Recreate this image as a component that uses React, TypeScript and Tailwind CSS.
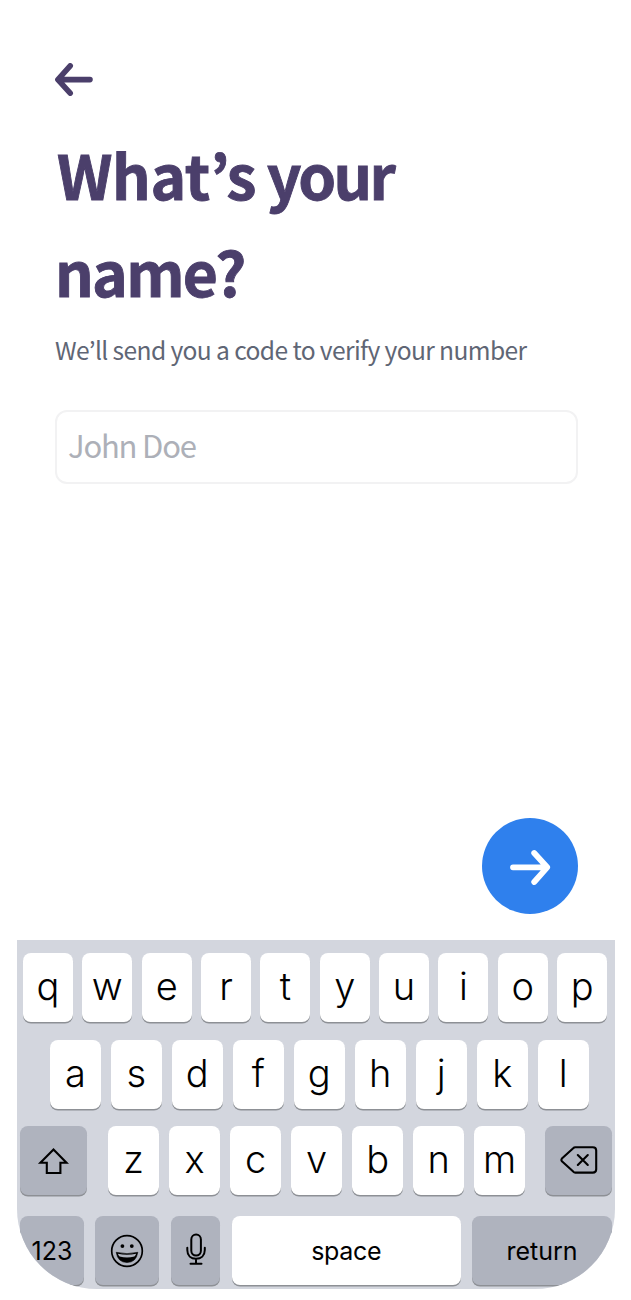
import type { ReactNode } from "react";

const topRow = ["q", "w", "e", "r", "t", "y", "u", "i", "o", "p"];
const homeRow = ["a", "s", "d", "f", "g", "h", "j", "k", "l"];
const bottomRow = ["z", "x", "c", "v", "b", "n", "m"];

function Key({ children, className = "" }: { children: ReactNode; className?: string }) {
  return (
    <button
      className={`flex h-[69px] shrink-0 items-center justify-center rounded-[8px] shadow-[0_1.5px_0_#8d9095] ${className}`}
    >
      {children}
    </button>
  );
}

function Letter({ char, className }: { char: string; className: string }) {
  return (
    <Key className={`bg-white pb-[3px] text-[38px] leading-none font-light ${className}`}>{char}</Key>
  );
}

function ShiftIcon() {
  return (
    <svg width="32" height="28" viewBox="0 0 32 28" fill="none" stroke="#000" strokeWidth="2.1" strokeLinejoin="miter" className="-translate-x-px">
      <path d="M16.5 2.4 L29.5 15.7 H23.4 V26 H9.8 V15.7 H3.4 Z" />
    </svg>
  );
}

function DeleteIcon() {
  return (
    <svg width="38" height="28" viewBox="0 0 38 28" fill="none" stroke="#000" strokeWidth="2.1" strokeLinejoin="round" strokeLinecap="round" className="translate-x-px -translate-y-px">
      <path d="M15.3 1.2 H32.8 Q36.2 1.2 36.2 4.6 V23.2 Q36.2 26.6 32.8 26.6 H15.3 Q14.1 26.6 13.2 25.6 L1.9 15.2 Q0.9 13.9 1.9 12.6 L13.2 2.2 Q14.1 1.2 15.3 1.2 Z" />
      <path d="M17.8 9 L27.8 19 M27.8 9 L17.8 19" />
    </svg>
  );
}

function SmileIcon() {
  return (
    <svg width="34" height="34" viewBox="0 0 34 34" fill="none" stroke="#000">
      <circle cx="17" cy="17" r="15.3" strokeWidth="1.7" />
      <circle cx="12.4" cy="12.1" r="1.9" fill="#000" stroke="none" />
      <circle cx="21.8" cy="12.1" r="1.9" fill="#000" stroke="none" />
      <path
        d="M6.2 18.3 Q17 21 27.8 18.3 Q26.2 28.5 17 28.5 Q7.8 28.5 6.2 18.3 Z"
        fill="#000"
        stroke="#000"
        strokeWidth="0.6"
        strokeLinejoin="round"
      />
      <path d="M7.8 19.8 Q17 21.8 26.2 19.8 Q25.6 21.6 24.4 22.6 Q17 24.4 9.6 22.6 Q8.4 21.6 7.8 19.8 Z" fill="#afb3be" stroke="none" />
    </svg>
  );
}

function MicIcon() {
  return (
    <svg width="20" height="32" viewBox="0 0 20 32" fill="none" stroke="#000" strokeWidth="2" strokeLinecap="round" className="-translate-y-px">
      <rect x="5.3" y="1.6" width="9.6" height="21" rx="4.8" />
      <path d="M1.3 14.8 V17 C1.3 22.6 5 25.8 10 25.8 C15 25.8 18.8 22.6 18.8 17 V14.8 M10 25.8 V30.6 M4.5 30.8 H15.5" />
    </svg>
  );
}

function Keyboard() {
  return (
    <section className="ml-[17px] h-[348.5px] w-[597.5px] overflow-hidden rounded-b-[80px] bg-[#d3d6de] pt-[13px] font-[Inter,sans-serif] text-black">
      <div className="ml-[6px] flex gap-[9.35px]">
        {topRow.map((c) => (
          <Letter key={c} char={c} className="w-[50px]" />
        ))}
      </div>
      <div className="mt-[17.5px] ml-[32.7px] flex gap-[9.7px]">
        {homeRow.map((c) => (
          <Letter key={c} char={c} className="w-[51.3px]" />
        ))}
      </div>
      <div className="mt-[17.5px] ml-[3px] flex">
        <Key className="w-[67px] bg-[#afb3be]">
          <ShiftIcon />
        </Key>
        <div className="ml-[21px] flex gap-[9.7px]">
          {bottomRow.map((c) => (
            <Letter key={c} char={c} className="w-[51.3px]" />
          ))}
        </div>
        <Key className="ml-[19.5px] h-[67.5px] w-[67px] bg-[#afb3be]">
          <DeleteIcon />
        </Key>
      </div>
      <div className="mt-[20.5px] ml-[3px] flex text-[25px]">
        <Key className="w-[64px] bg-[#afb3be] pt-[3px]">123</Key>
        <Key className="ml-[11px] w-[64px] bg-[#afb3be] pt-0.5">
          <SmileIcon />
        </Key>
        <Key className="ml-[12px] h-[67.5px] w-[49px] bg-[#afb3be]">
          <MicIcon />
        </Key>
        <Key className="ml-[11.5px] w-[229.5px] bg-white pt-[3px] tracking-[-0.3px]">space</Key>
        <Key className="ml-[11px] w-[140px] bg-[#afb3be] pt-[3px]">return</Key>
      </div>
    </section>
  );
}

export default function App() {
  return (
    <main className="flex h-[1300px] w-[631px] flex-col overflow-hidden bg-white font-['Noto_Sans_CJK_KR',sans-serif]">
      <div className="flex h-[940px] shrink-0 flex-col pt-[63px] pr-[53px] pl-[55px]">
        <button aria-label="Back" className="h-[33px] w-[38px]">
          <svg width="38" height="33" viewBox="0 0 38 33" fill="none" stroke="#4b3f6b" strokeWidth="5.6" strokeLinecap="round" strokeLinejoin="round">
            <path d="M15.2 2.9 L2.9 16.6 L15.2 30.2 M4.4 16.6 H35" />
            <path d="M4 16.6 L6 14.8 V18.4 Z" fill="#4b3f6b" strokeWidth="4.6" />
          </svg>
        </button>
        <h1 className="mt-[30px] text-[60.5px] leading-[96.5px] font-bold whitespace-nowrap text-[#4b3f6b] [-webkit-text-stroke:0.9px_#4b3f6b]">
          <span className="block pl-[2px] tracking-[-0.3px] [word-spacing:-3px]">
            What’s <span className="tracking-[-2.6px]">your</span>
          </span>
          <span className="block tracking-[-1.7px]">name?</span>
        </h1>
        <p className="mt-[12px] text-[24.6px] leading-[36px] tracking-[-0.61px] whitespace-nowrap text-[#5f6675]">
          We’ll send you a code to verify your number
        </p>
        <input
          placeholder="John Doe"
          aria-label="Name"
          className="mt-[43px] h-[74px] w-[523px] shrink-0 rounded-[12px] border-2 border-[#f2f2f3] px-[11px] pb-[6px] text-[31px] tracking-[-1.2px] placeholder:text-[#adb0b8]"
        />
        <button aria-label="Continue" className="mt-[334px] flex size-[96px] shrink-0 items-center justify-center self-end rounded-full bg-[#2f80ed]">
          <svg width="42" height="38" viewBox="0 0 42 38" fill="none" stroke="#fff" strokeWidth="5.8" strokeLinecap="round" strokeLinejoin="round" className="translate-y-px">
            <path d="M25.2 5 L38.2 19.3 L25.2 34 M37 19.3 H4" />
            <path d="M37 19.3 L35 17.4 V21.2 Z" fill="#fff" strokeWidth="4.6" />
          </svg>
        </button>
      </div>
      <Keyboard />
    </main>
  );
}
